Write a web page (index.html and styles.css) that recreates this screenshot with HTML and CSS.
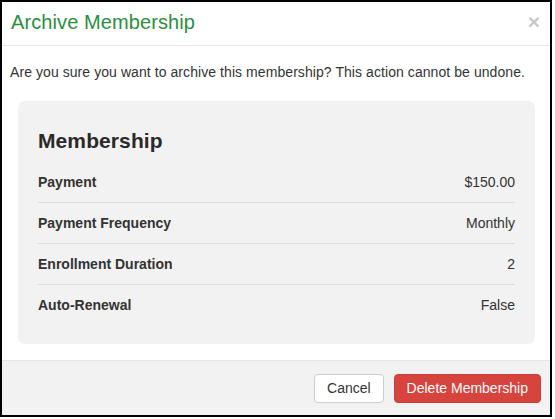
FILE: index.html
```html
<!DOCTYPE html>
<html>
<head>
<meta charset="utf-8">
<link rel="stylesheet" href="styles.css">
</head>
<body>
<div class="modal">
  <div class="modal-header">
    <h4 class="modal-title">Archive Membership</h4>
    <span class="close">&times;</span>
  </div>
  <div class="modal-body">
    <p class="message">Are you sure you want to archive this membership? This action cannot be undone.</p>
    <div class="card">
      <h3 class="card-title">Membership</h3>
      <div class="row"><span class="label">Payment</span><span class="value">$150.00</span></div>
      <div class="row"><span class="label">Payment Frequency</span><span class="value">Monthly</span></div>
      <div class="row"><span class="label">Enrollment Duration</span><span class="value">2</span></div>
      <div class="row"><span class="label">Auto-Renewal</span><span class="value">False</span></div>
    </div>
  </div>
  <div class="modal-footer">
    <button class="btn btn-default">Cancel</button>
    <button class="btn btn-danger">Delete Membership</button>
  </div>
</div>
</body>
</html>
```
FILE: styles.css
```css
* { box-sizing: border-box; }
html, body { margin: 0; padding: 0; background: #fff; }
body {
  font-family: "Liberation Sans", Arial, Helvetica, sans-serif;
  font-size: 14px;
  color: #333;
}
.modal {
  width: 552px;
  height: 417px;
  border: 2px solid #000;
  display: flex;
  flex-direction: column;
  background: #fff;
}
.modal-header {
  display: flex;
  justify-content: space-between;
  align-items: center;
  padding: 9px 10px 12px 9px;
  border-bottom: 1px solid #e5e5e5;
}
.modal-title {
  margin: 0;
  font-size: 20px;
  line-height: 22px;
  font-weight: normal;
  color: #2b8f3e;
  letter-spacing: 0.1px;
}
.close {
  font-size: 21px;
  font-weight: bold;
  line-height: 1;
  color: #c8c8c8;
  position: relative;
  top: -1px;
}
.modal-body {
  flex: 1;
  padding: 16px 8px;
}
.message {
  margin: 0 0 19px;
  line-height: 20px;
  letter-spacing: 0.07px;
}
.card {
  margin: 0 7px 0 8px;
  background: #f2f2f2;
  border-radius: 7px;
  padding: 20px 20px 19px;
}
.card-title {
  margin: 7px 0 9px;
  font-size: 21px;
  line-height: 25px;
  font-weight: bold;
  color: #2a2a2a;
  letter-spacing: 0.1px;
}
.row {
  display: flex;
  justify-content: space-between;
  padding: 12px 0;
  line-height: 16px;
  border-bottom: 1px solid #dcdcdc;
}
.row:last-child { border-bottom: none; }
.label { font-weight: bold; }
.modal-footer {
  display: flex;
  justify-content: flex-end;
  gap: 10px;
  padding: 13px 9px 12px;
  border-top: 1px solid #e5e5e5;
  background: #f2f2f2;
}
.btn {
  font-family: inherit;
  font-size: 14px;
  line-height: 17px;
  padding: 5px 12px;
  border-radius: 4px;
  border: 1px solid #ccc;
  cursor: pointer;
}
.btn-default { background: #fff; color: #333; }
.btn-danger { background: #d7443e; border-color: #c9403a; color: #fff; }
```
